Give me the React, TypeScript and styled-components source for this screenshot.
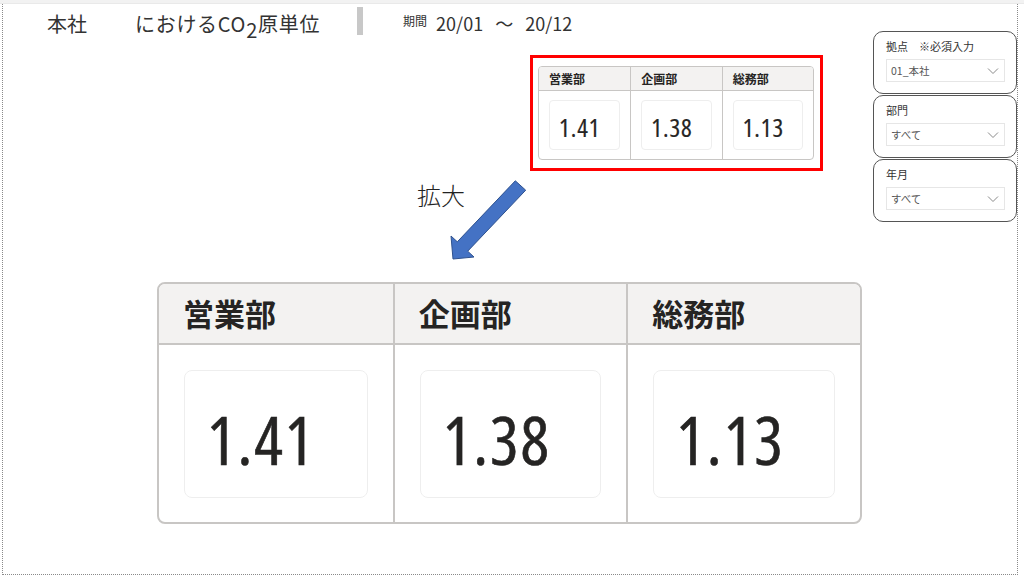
import React from "react";
import styled, { createGlobalStyle } from "styled-components";

const GlobalStyle = createGlobalStyle`
  html, body { margin: 0; padding: 0; background: #ffffff; }
  body { font-family: "Noto Sans CJK JP", "Noto Sans", sans-serif; color: #252423; }
  * { box-sizing: border-box; }
`;

const JP = `"Noto Sans CJK JP", "Noto Sans", sans-serif`;
const NUM = `"Open Sans", "Noto Sans CJK JP", sans-serif`;

const Page = styled.div`
  width: 1024px;
  height: 582px;
  overflow: hidden;
  background: #ffffff;
`;

const TopStrip = styled.div`
  height: 4px;
  background: #f2f2f2;
  border-bottom: 1px solid #e9e9e9;
`;

const Canvas = styled.div`
  margin-left: 2px;
  width: 1016px;
  height: 571px;
  border-left: 1px dotted #8a8a8a;
  border-right: 1px dotted #8a8a8a;
  border-bottom: 1px dotted #8a8a8a;
  display: flex;
`;

const Main = styled.div`
  width: 870px;
  display: flex;
  flex-direction: column;
`;

const Header = styled.div`
  height: 39px;
  display: flex;
  align-items: center;
  padding-left: 44px;
  font-family: ${JP};
  color: #333333;
`;

const Place = styled.span`
  font-size: 20px;
  margin-right: 48px;
`;

const Title = styled.span`
  font-size: 20px;
  letter-spacing: 0.7px;
  sub {
    font-size: 20px;
    vertical-align: -6px;
    line-height: 0;
  }
`;

const Divider = styled.span`
  width: 6px;
  height: 28px;
  background: #c8c8c8;
  margin-left: 37px;
  margin-right: 40px;
  margin-top: -6px;
`;

const PeriodLabel = styled.span`
  font-size: 12px;
  margin-right: 9px;
  margin-top: -6px;
`;

const Period = styled.span`
  font-size: 18px;
  word-spacing: 8px;
  margin-top: -2px;
`;

const RedFrame = styled.div`
  margin-top: 12px;
  margin-left: 527px;
  width: 293px;
  height: 116px;
  border: 3px solid #ff0000;
  padding: 8px 6px 8px 5px;
`;

const Table = styled.div<{ $big?: boolean }>`
  display: grid;
  grid-template-columns: repeat(3, 1fr);
  grid-template-rows: ${(p) => (p.$big ? "61px 1fr" : "24px 1fr")};
  height: 100%;
  border: ${(p) => (p.$big ? "2px" : "1px")} solid #c8c6c4;
  border-radius: ${(p) => (p.$big ? "8px" : "4px")};
  overflow: hidden;
  background: #ffffff;
`;

const HeadCell = styled.div<{ $big?: boolean; $first?: boolean }>`
  background: #f3f2f1;
  border-bottom: ${(p) => (p.$big ? "2px" : "1px")} solid #c8c6c4;
  border-left: ${(p) => (p.$first ? "none" : `${p.$big ? "2px" : "1px"} solid #c8c6c4`)};
  display: flex;
  align-items: center;
  padding-left: ${(p) => (p.$big ? "24px" : "10px")};
  padding-bottom: ${(p) => (p.$big ? "2px" : "0")};
  font-family: ${JP};
  font-weight: 700;
  font-size: ${(p) => (p.$big ? "31px" : "12px")};
  color: #252423;
`;

const BodyCell = styled.div<{ $big?: boolean; $first?: boolean }>`
  border-left: ${(p) => (p.$first ? "none" : `${p.$big ? "2px" : "1px"} solid #c8c6c4`)};
  padding: ${(p) => (p.$big ? "25px 25px 24px 25px" : "9px 10px 9px 10px")};
  display: flex;
`;

const ValueBox = styled.div<{ $big?: boolean }>`
  flex: 1;
  border: 1px solid #eeeeee;
  border-radius: ${(p) => (p.$big ? "8px" : "4px")};
  display: flex;
  align-items: center;
  padding-left: ${(p) => (p.$big ? "22px" : "9px")};
  padding-top: ${(p) => (p.$big ? "10px" : "4px")};
  font-family: ${NUM};
  font-stretch: 80%;
  font-size: ${(p) => (p.$big ? "67px" : "25px")};
  letter-spacing: ${(p) => (p.$big ? "2px" : "1px")};
  color: #252423;
  line-height: 1;
  -webkit-text-stroke: ${(p) => (p.$big ? "0.6px #252423" : "0.2px #252423")};
`;

const Annotation = styled.div`
  position: relative;
  height: 111px;
  padding-top: 12px;
  padding-left: 414px;
`;

const ZoomLabel = styled.span`
  font-family: ${JP};
  font-size: 24px;
  font-weight: 300;
  color: #222222;
  line-height: 24px;
`;

const ArrowSvg = styled.svg`
  position: absolute;
  left: 445px;
  top: 6px;
`;

const BigWrap = styled.div`
  margin-left: 154px;
  width: 705px;
  height: 242px;
`;

const SlicerPanel = styled.div`
  width: 144px;
  margin-top: 27px;
  display: flex;
  flex-direction: column;
  gap: 1px;
`;

const Slicer = styled.div`
  height: 63px;
  border: 1.3px solid #555555;
  border-radius: 10px;
  padding: 7px 11px 0 12px;
  display: flex;
  flex-direction: column;
  background: #ffffff;
`;

const SlicerLabel = styled.div`
  font-family: ${JP};
  font-size: 11px;
  color: #333333;
  height: 15px;
  line-height: 15px;
  white-space: pre;
`;

const Dropdown = styled.div`
  margin-top: 5px;
  height: 23px;
  border: 1px solid #e6e6e6;
  display: flex;
  align-items: center;
  justify-content: space-between;
  padding: 0 5px 0 4px;
  font-family: ${JP};
  font-size: 10.5px;
  color: #555555;
`;

const Chevron = () => (
  <svg width="12" height="8" viewBox="0 0 12 8">
    <path d="M1 1.5 L6 6.5 L11 1.5" fill="none" stroke="#8a8a8a" strokeWidth="1" />
  </svg>
);

const depts = [
  { name: "営業部", value: "1.41" },
  { name: "企画部", value: "1.38" },
  { name: "総務部", value: "1.13" },
];

const ValueTable = ({ big }: { big?: boolean }) => (
  <Table $big={big}>
    {depts.map((d, i) => (
      <HeadCell key={d.name} $big={big} $first={i === 0}>
        {d.name}
      </HeadCell>
    ))}
    {depts.map((d, i) => (
      <BodyCell key={d.value} $big={big} $first={i === 0}>
        <ValueBox $big={big}>{d.value}</ValueBox>
      </BodyCell>
    ))}
  </Table>
);

const slicers = [
  { label: "拠点　※必須入力", value: "01_本社" },
  { label: "部門", value: "すべて" },
  { label: "年月", value: "すべて" },
];

export default function App() {
  return (
    <>
      <GlobalStyle />
      <Page>
        <TopStrip />
        <Canvas>
          <Main>
            <Header>
              <Place>本社</Place>
              <Title>
                におけるCO<sub>2</sub>原単位
              </Title>
              <Divider />
              <PeriodLabel>期間</PeriodLabel>
              <Period>20/01 ～ 20/12</Period>
            </Header>
            <RedFrame>
              <ValueTable />
            </RedFrame>
            <Annotation>
              <ZoomLabel>拡大</ZoomLabel>
              <ArrowSvg width="82" height="86" viewBox="0 0 82 86">
                <polygon
                  points="67.3,3.8 77.7,13.2 19.7,74.2 26,80 5,82 3,59 9.3,64.8"
                  fill="#4472c4"
                  stroke="#2f528f"
                  strokeWidth="1"
                  strokeLinejoin="miter"
                />
              </ArrowSvg>
            </Annotation>
            <BigWrap>
              <ValueTable big />
            </BigWrap>
          </Main>
          <SlicerPanel>
            {slicers.map((s) => (
              <Slicer key={s.label}>
                <SlicerLabel>{s.label}</SlicerLabel>
                <Dropdown>
                  <span>{s.value}</span>
                  <Chevron />
                </Dropdown>
              </Slicer>
            ))}
          </SlicerPanel>
        </Canvas>
      </Page>
    </>
  );
}
